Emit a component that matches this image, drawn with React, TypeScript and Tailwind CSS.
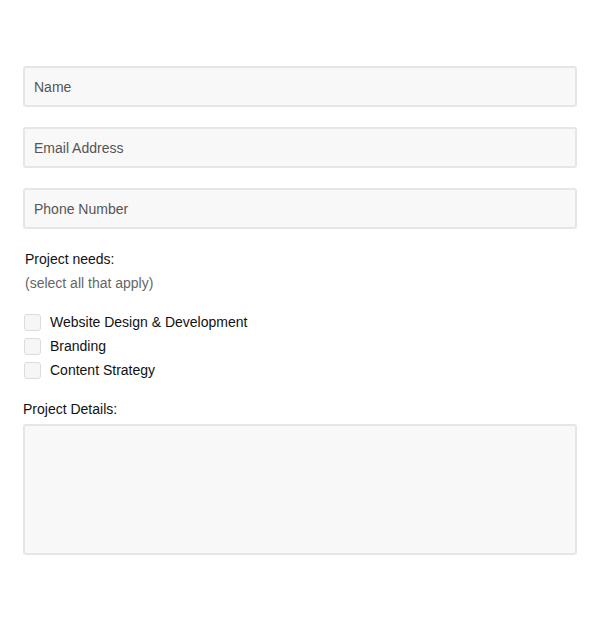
const inputCls =
  'block w-full h-[41px] rounded-[3px] border-2 border-[#e6e6e6] bg-[#f8f8f8] px-[9px] text-[14px] text-[#555] placeholder:text-[#555] outline-none';

const needs = ['Website Design & Development', 'Branding', 'Content Strategy'];

export default function App() {
  return (
    <div className="min-h-[627px] w-[600px] bg-white font-['Liberation_Sans',Arial,sans-serif] text-[14px] text-[#111]">
      <form className="flex flex-col px-[23px] pt-[66px]">
        <div className="flex flex-col gap-[20px]">
          <input className={inputCls} placeholder="Name" />
          <input className={inputCls} placeholder="Email Address" />
          <input className={inputCls} placeholder="Phone Number" />
        </div>

        <p className="mt-[20px] pl-[2px] leading-[20px]">Project needs:</p>
        <p className="mt-[4px] pl-[2px] leading-[20px] text-[#666]">(select all that apply)</p>

        <div className="mt-[20px] flex flex-col gap-[6px] pl-[1px]">
          {needs.map((n) => (
            <label key={n} className="flex h-[18px] items-center gap-[9px]">
              <span className="block h-[17px] w-[17px] rounded-[3px] border border-[#dcdcdc] bg-[#f6f6f6]" />
              <span className="leading-[18px]">{n}</span>
            </label>
          ))}
        </div>

        <p className="mt-[20px] leading-[20px]">Project Details:</p>
        <textarea className="mt-[5px] block h-[131px] w-full resize-none rounded-[3px] border-2 border-[#e6e6e6] bg-[#f8f8f8] outline-none" />
      </form>
    </div>
  );
}
